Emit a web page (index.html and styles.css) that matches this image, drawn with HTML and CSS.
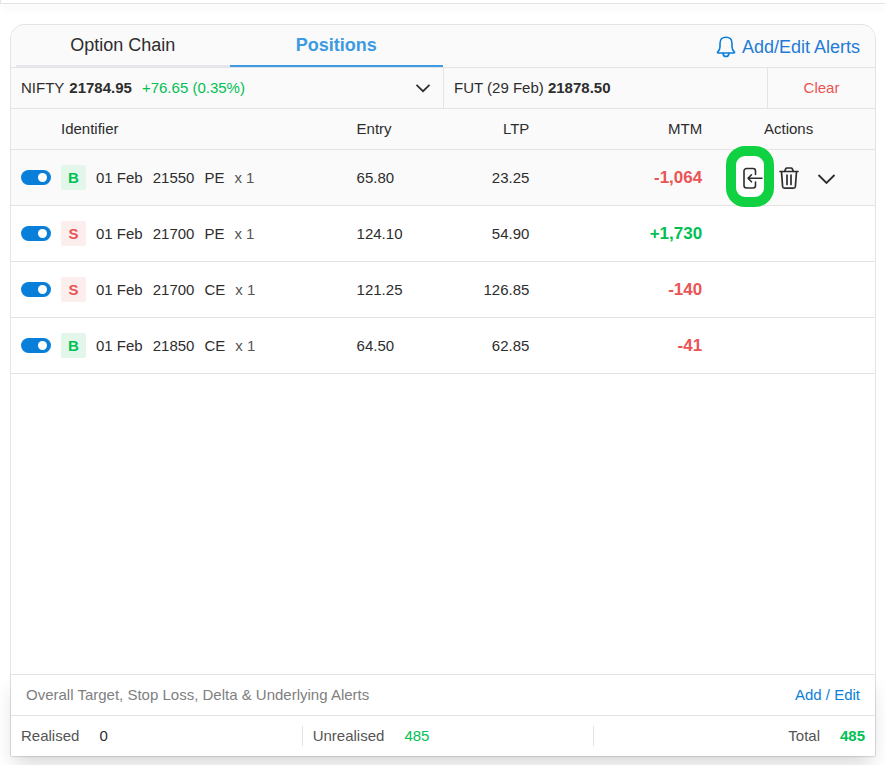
FILE: index.html
```html
<!DOCTYPE html>
<html lang="en">
<head>
  <meta charset="UTF-8" />
  <meta name="viewport" content="width=device-width, initial-scale=1.0" />
  <title>Positions</title>
  <link rel="stylesheet" href="styles.css">
</head>
<body>
  <header class="topbar"></header>

  <main class="panel">
    <div class="panel-head">
      <nav class="tabs">
        <button class="tab" type="button">Option Chain</button>
        <button class="tab active" type="button">Positions</button>
      </nav>
      <a class="alerts-link" href="#">
        <svg width="20" height="22" viewBox="0 0 20 22" fill="none" stroke="#0a7fda" stroke-width="1.600" stroke-linecap="round" stroke-linejoin="round">
          <path d="M10 1.300C6.300 1.300 4 3.800 4 7.500v3.200c0 2.300-.7 3.700-2.200 5.100-.6.600-.5 1.200.4 1.200h15.600c.9 0 1-.6.400-1.200-1.500-1.400-2.200-2.800-2.200-5.100V7.500c0-3.700-2.300-6.200-6-6.200z" />
          <path d="M7 17.300c.2 2 1.400 3.200 3 3.200s2.800-1.200 3-3.200" />
        </svg>
        Add/Edit Alerts
      </a>
    </div>

    <div class="ticker">
      <button class="ticker-index" type="button">
        <span>NIFTY</span>
        <b>21784.95</b>
        <span class="change">+76.65 (0.35%)</span>
        <svg class="caret" width="16" height="10" viewBox="0 0 16 10" fill="none" stroke="currentColor" stroke-width="1.700"><path d="M1.500 1.800L8 8.200l6.500-6.400" /></svg>
      </button>
      <div class="ticker-fut">FUT (29 Feb) <b>21878.50</b></div>
      <button class="ticker-clear" type="button">Clear</button>
    </div>

    <table class="positions">
      <thead>
        <tr>
          <th class="col-id">Identifier</th>
          <th class="col-entry">Entry</th>
          <th class="col-ltp">LTP</th>
          <th class="col-mtm">MTM</th>
          <th class="col-actions">Actions</th>
        </tr>
      </thead>
      <tbody>
        <tr class="selected">
          <td>
            <div class="identifier">
              <input class="toggle" type="checkbox" aria-label="01 Feb 21550 PE" checked>
              <span class="side buy">B</span>
              <span>01 Feb</span><span>21550</span><span>PE</span><span class="qty">x 1</span>
            </div>
          </td>
          <td>65.80</td>
          <td class="num">23.25</td>
          <td class="mtm loss">-1,064</td>
          <td>
            <div class="actions">
              <button class="icon-btn highlight" type="button" aria-label="Exit position">
                <svg width="22" height="24" viewBox="0 0 22 24" fill="none" stroke="currentColor" stroke-width="1.600" stroke-linecap="round" stroke-linejoin="round">
                  <path d="M14.500 8.500V5a2.500 2.500 0 0 0-2.500-2.500H5.500A2.500 2.500 0 0 0 3 5v14.500A2.500 2.500 0 0 0 5.500 22H12a2.500 2.500 0 0 0 2.500-2.500v-3.500" />
                  <path d="M21 12.300H7M10.500 8.800L7 12.300l3.500 3.500" />
                </svg>
              </button>
              <button class="icon-btn" type="button" aria-label="Delete position">
                <svg width="22" height="24" viewBox="0 0 22 24" fill="none" stroke="currentColor" stroke-width="1.700" stroke-linecap="round" stroke-linejoin="round">
                  <path d="M2 5.500h18M6.500 5.500l1.200-2.700c.3-.6.6-.8 1.200-.8h4.200c.6 0 .9.200 1.200.8l1.200 2.700M3.500 5.500l1.100 15c.1 1.100.8 1.700 1.900 1.700h9c1.100 0 1.800-.6 1.900-1.700l1.100-15M9 9v9.500M13 9v9.500" />
                </svg>
              </button>
              <button class="icon-btn" type="button" aria-label="More">
                <svg width="22" height="24" viewBox="0 0 22 24" fill="none" stroke="currentColor" stroke-width="1.800"><path d="M3.500 9l8 8 8-8" /></svg>
              </button>
            </div>
          </td>
        </tr>
        <tr>
          <td>
            <div class="identifier">
              <input class="toggle" type="checkbox" aria-label="01 Feb 21700 PE" checked>
              <span class="side sell">S</span>
              <span>01 Feb</span><span>21700</span><span>PE</span><span class="qty">x 1</span>
            </div>
          </td>
          <td>124.10</td>
          <td class="num">54.90</td>
          <td class="mtm profit">+1,730</td>
          <td></td>
        </tr>
        <tr>
          <td>
            <div class="identifier">
              <input class="toggle" type="checkbox" aria-label="01 Feb 21700 CE" checked>
              <span class="side sell">S</span>
              <span>01 Feb</span><span>21700</span><span>CE</span><span class="qty">x 1</span>
            </div>
          </td>
          <td>121.25</td>
          <td class="num">126.85</td>
          <td class="mtm loss">-140</td>
          <td></td>
        </tr>
        <tr>
          <td>
            <div class="identifier">
              <input class="toggle" type="checkbox" aria-label="01 Feb 21850 CE" checked>
              <span class="side buy">B</span>
              <span>01 Feb</span><span>21850</span><span>CE</span><span class="qty">x 1</span>
            </div>
          </td>
          <td>64.50</td>
          <td class="num">62.85</td>
          <td class="mtm loss">-41</td>
          <td></td>
        </tr>
      </tbody>
    </table>

    <footer class="panel-foot">
      <div class="overall">
        <span>Overall Target, Stop Loss, Delta &amp; Underlying Alerts</span>
        <a href="#">Add / Edit</a>
      </div>
      <div class="totals">
        <div class="total-item">Realised <span class="zero">0</span></div>
        <div class="total-item">Unrealised <span class="profit">485</span></div>
        <div class="total-item">Total <b class="profit">485</b></div>
      </div>
    </footer>
  </main>
</body>
</html>
```

FILE: styles.css
```css
* {
  box-sizing: border-box;
}

body {
  margin: 0;
  min-height: 100vh;
  display: flex;
  flex-direction: column;
  font-family: "Liberation Sans", Arial, sans-serif;
  font-size: 15px;
  line-height: 20px;
  color: #2d2d2d;
  background: #fff;
}

button {
  font: inherit;
  color: inherit;
  background: none;
  border: none;
  padding: 0;
  cursor: pointer;
}

a {
  color: #0a7fda;
  text-decoration: none;
}

.topbar {
  height: 4px;
  border-left: 1px solid #e3e3e8;
  border-bottom: 1px solid #e3e3e8;
  box-shadow: 0 4px 10px rgba(0, 0, 0, 0.06);
}

.panel {
  flex: 1;
  display: flex;
  flex-direction: column;
  margin: 20px 9px 9px 10px;
  border: 1px solid #e3e3e8;
  border-bottom: none;
  border-radius: 15px 15px 0 0;
}

/* tabs */
.panel-head {
  display: flex;
  height: 43px;
  background: #fafafa;
  border-bottom: 1px solid #e3e3e8;
  border-radius: 14px 14px 0 0;
}

.tabs {
  display: flex;
  width: 50%;
  padding-left: 5px;
}

.tab {
  flex: 1;
  font-size: 18px;
  border-bottom: 2px solid #e6e6ee;
}

.tab.active {
  color: #3c9ae2;
  font-weight: bold;
  border-bottom-color: #3c9ae2;
}

.alerts-link {
  display: flex;
  align-items: center;
  gap: 6px;
  margin-left: auto;
  padding: 2px 15px 0 0;
  font-size: 18px;
  color: #1f7bd6;
}

/* index and futures prices */
.ticker {
  display: flex;
  height: 41px;
  background: #fafafa;
  border-bottom: 1px solid #e3e3e8;
}

.ticker-index {
  display: flex;
  align-items: center;
  gap: 5px;
  width: 50%;
  padding: 0 12px 0 10px;
}

.change {
  margin-left: 5px;
  color: #00c053;
}

.caret {
  margin-left: auto;
}

.ticker-fut {
  flex: 1;
  padding: 10px;
  border-left: 1px solid #e3e3e8;
}

.ticker-clear {
  width: 12.5%;
  color: #ea5455;
  border-left: 1px solid #e3e3e8;
}

/* positions */
.positions {
  width: 100%;
  table-layout: fixed;
  border-collapse: separate;
  border-spacing: 0;
}

.positions th {
  height: 41px;
  padding: 0;
  font-weight: normal;
  text-align: left;
  background: #fafafa;
  border-bottom: 1px solid #e3e3e3;
}

.positions td {
  height: 56px;
  padding: 0;
  border-bottom: 1px solid #e3e3e3;
}

.positions .selected td {
  background: #fafafa;
}

.positions .col-id {
  width: 40%;
  padding-left: 50px;
}

.positions .col-entry {
  width: 10%;
}

.positions .col-ltp {
  width: 10%;
  text-align: right;
}

.positions .col-mtm {
  width: 20%;
  text-align: right;
}

.positions .col-actions {
  width: 20%;
  text-align: center;
}

.identifier {
  display: flex;
  align-items: center;
  gap: 10px;
  padding-left: 10px;
}

.toggle {
  appearance: none;
  display: flex;
  justify-content: flex-end;
  align-items: center;
  width: 30px;
  height: 15px;
  margin: 0;
  padding-right: 4px;
  border-radius: 8px;
  background: #0a7fda;
}

.toggle::before {
  content: "";
  width: 9px;
  height: 9px;
  border-radius: 50%;
  background: #fff;
}

.toggle:not(:checked) {
  justify-content: flex-start;
  padding: 0 0 0 4px;
  background: #bbb;
}

.side {
  width: 25px;
  height: 25px;
  border-radius: 2px;
  font-weight: bold;
  line-height: 25px;
  text-align: center;
}

.buy {
  color: #00c053;
  background: #e2f6ea;
}

.sell {
  color: #ea5455;
  background: #fdeeee;
}

.qty {
  color: #555;
}

.num,
.mtm {
  text-align: right;
}

.mtm {
  font-size: 17px;
  font-weight: bold;
}

.profit {
  color: #00c053;
}

.loss {
  color: #ea5455;
}

.actions {
  display: flex;
  justify-content: center;
  gap: 15px;
}

.icon-btn {
  position: relative;
  height: 24px;
}

.icon-btn svg {
  display: block;
  position: relative;
  z-index: 1;
}

.highlight::before {
  content: "";
  position: absolute;
  inset: -20px -11px -17px -15px;
  border: 10px solid #0fd141;
  border-radius: 19px;
  background: #fff;
}

/* footer */
.panel-foot {
  margin-top: auto;
  background: #fff;
  box-shadow: 0 1px 1px rgba(60, 60, 80, 0.15), 0 12px 20px -4px rgba(0, 0, 0, 0.16);
}

.overall {
  display: flex;
  justify-content: space-between;
  padding: 10px 15px;
  color: #808080;
  border-top: 1px solid #e3e3e3;
}

.totals {
  display: flex;
  padding: 10px;
  color: #555;
  border-top: 1px solid #e3e3e3;
}

.total-item {
  flex: 1;
  display: flex;
  gap: 20px;
  padding: 0 10px;
  border-right: 1px solid #e3e3e8;
}

.total-item:first-child {
  padding-left: 0;
}

.total-item:last-child {
  justify-content: flex-end;
  padding: 0;
  border-right: none;
}

.zero {
  color: #2d2d2d;
}
```
